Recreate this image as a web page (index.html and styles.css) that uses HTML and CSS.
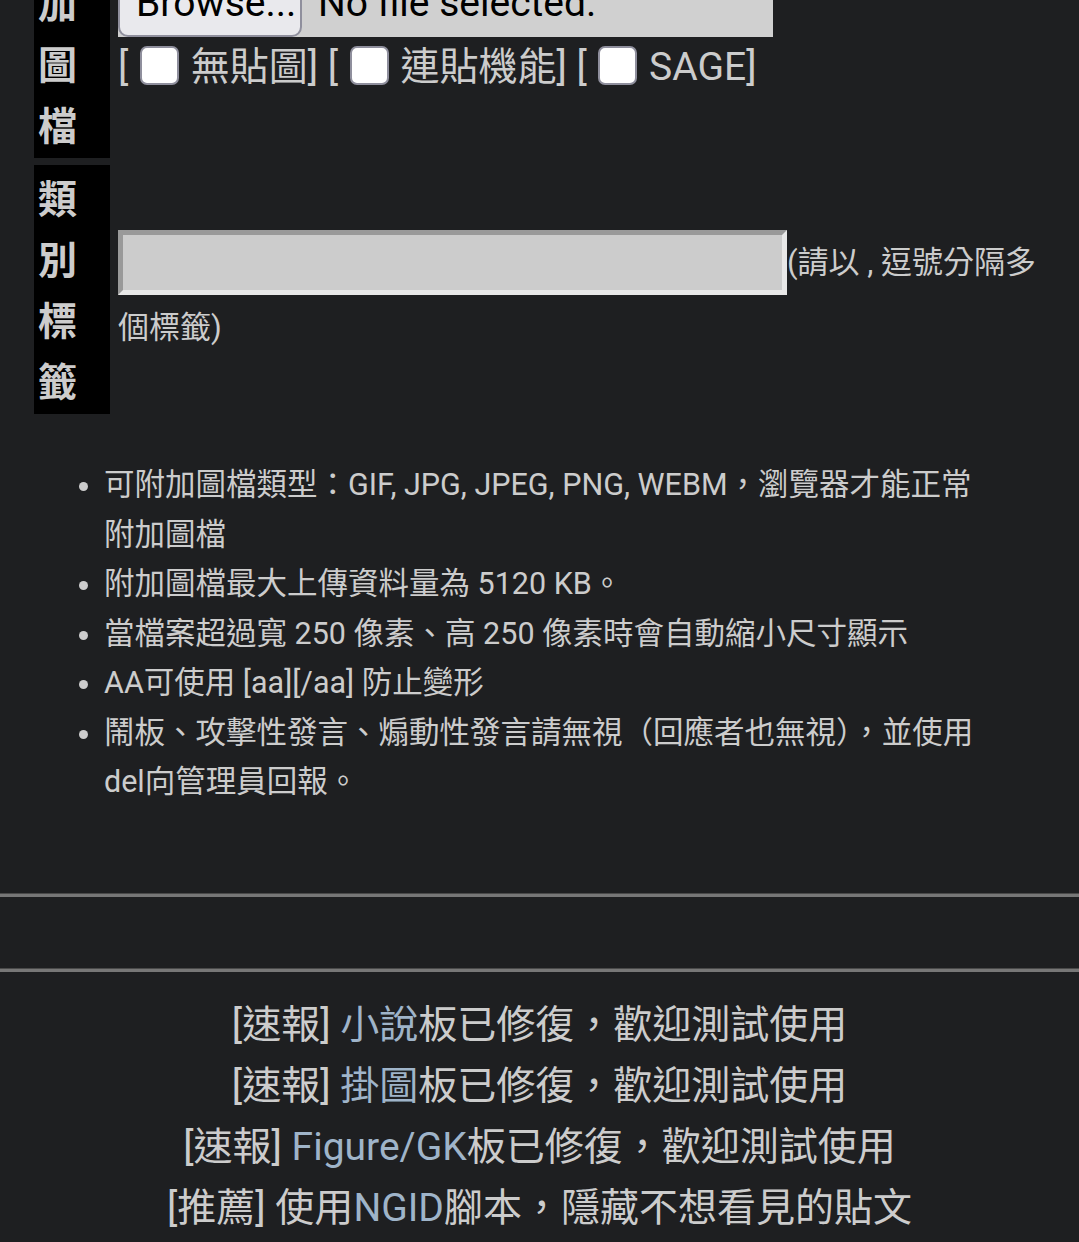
FILE: index.html
```html
<!DOCTYPE html>
<html lang="zh-Hant">
<head>
    <meta charset="UTF-8">
    <title>Komica</title>
    <link rel="stylesheet" href="styles.css">
</head>
<body>
    <form class="postform">
        <div class="form-grid">
            <div class="label">附加圖檔</div>
            <div class="field">
                <div class="file-input">
                    <span class="file-btn">Browse...</span>
                    <span class="file-name">No file selected.</span>
                </div>
                <div class="options">[ <input type="checkbox" class="check"> 無貼圖] [ <input type="checkbox" class="check"> 連貼機能] [ <input type="checkbox" class="check"> SAGE]</div>
            </div>

            <div class="label">類別標籤</div>
            <div class="field field-tags">
                <input type="text" class="tag-input"><span class="hint">(請以 , 逗號分隔多個標籤)</span>
            </div>
        </div>

        <ul class="rules">
            <li>可附加圖檔類型：GIF, JPG, JPEG, PNG, WEBM，瀏覽器才能正常附加圖檔</li>
            <li>附加圖檔最大上傳資料量為 5120 KB。</li>
            <li>當檔案超過寬 250 像素、高 250 像素時會自動縮小尺寸顯示</li>
            <li>AA可使用 [aa][/aa] 防止變形</li>
            <li>鬧板、攻擊性發言、煽動性發言請無視（回應者也無視），並使用del向管理員回報。</li>
        </ul>
    </form>

    <hr class="sep sep-first">
    <div class="ad-space"></div>
    <hr class="sep">

    <div class="news">
        <div>[速報] <a href="#">小說</a>板已修復，歡迎測試使用</div>
        <div>[速報] <a href="#">掛圖</a>板已修復，歡迎測試使用</div>
        <div>[速報] <a href="#">Figure/GK</a>板已修復，歡迎測試使用</div>
        <div>[推薦] 使用<a href="#">NGID</a>腳本，隱藏不想看見的貼文</div>
    </div>
</body>
</html>
```

FILE: styles.css
```css
body {
    margin: 0;
    background-color: #1e1f21;
    color: #cccccc;
    font-family: Roboto, "Noto Sans CJK TC", sans-serif;
    font-size: 39px;
    overflow: hidden;
}

/* page is scrolled: the first row starts above the viewport */
.postform {
    margin-top: -91px;
}

.form-grid {
    display: grid;
    grid-template-columns: 76px 1fr;
    column-gap: 8px;
    row-gap: 7px;
    margin: 0 34px;
}

.label {
    box-sizing: border-box;
    width: 76px;
    padding: 5px 4px 0;
    background-color: #000;
    color: #cccccc;
    font-weight: bold;
    font-size: 39px;
    line-height: 61px;
}

.field {
    align-self: center;
}

.file-input {
    display: flex;
    align-items: stretch;
    width: 655px;
    height: 67px;
    background-color: #d0d0d0;
    color: #000;
}

.file-btn {
    display: flex;
    align-items: center;
    box-sizing: border-box;
    width: 184px;
    padding: 0 16px;
    background-color: #e9e9ed;
    border: 2px solid #8f8f9d;
    border-radius: 10px;
}

.file-name {
    display: flex;
    align-items: center;
    margin-left: 16px;
}

.options {
    line-height: 61px;
    white-space: nowrap;
}

.check {
    appearance: none;
    box-sizing: border-box;
    width: 39px;
    height: 39px;
    margin: 0 2px;
    vertical-align: -5px;
    background-color: #fff;
    border: 2px solid #8f8f9d;
    border-radius: 7px;
}

.field-tags {
    padding-top: 8px;
    line-height: 60px;
}

.tag-input {
    box-sizing: border-box;
    width: 669px;
    height: 65px;
    margin: 0;
    vertical-align: middle;
    background-color: #cccccc;
    border-style: solid;
    border-width: 5px;
    border-color: #999 #e8e8e8 #e8e8e8 #999;
}

.hint {
    font-size: 31px;
    vertical-align: middle;
}

.rules {
    margin: 46px 89px 0 0;
    padding-left: 104px;
    font-size: 30.5px;
    line-height: 49.5px;
}

.sep {
    height: 0;
    margin: 0;
    border: 0;
    border-top: 1px solid #4a4a4a;
    border-bottom: 3px solid #777;
}

.sep-first {
    margin-top: 86px;
}

.ad-space {
    height: 71px;
}

.news {
    margin-top: 23px;
    text-align: center;
    font-size: 39px;
    line-height: 61px;
}

.news a {
    color: #9fb4c9;
    text-decoration: none;
}
```
